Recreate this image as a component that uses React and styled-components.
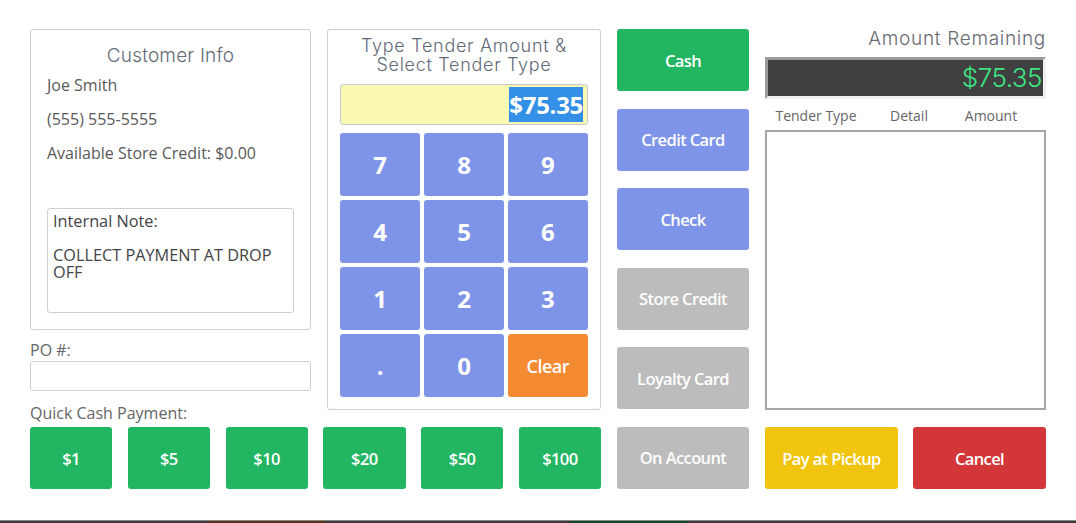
import React from "react"
import styled, { createGlobalStyle } from "styled-components"

const GlobalStyle = createGlobalStyle`
  html, body {
    margin: 0;
    padding: 0;
    background: #3a3a3a;
  }
  body {
    font-family: "Open Sans", "Liberation Sans", sans-serif;
  }
`

const quickCash = ["$1", "$5", "$10", "$20", "$50", "$100"]
const keys = ["7", "8", "9", "4", "5", "6", "1", "2", "3", ".", "0", "Clear"]
const tenders = [
  { label: "Cash", color: "#22b562" },
  { label: "Credit Card", color: "#7d94e9" },
  { label: "Check", color: "#7d94e9" },
  { label: "Store Credit", color: "#bcbcbc" },
  { label: "Loyalty Card", color: "#bcbcbc" },
  { label: "On Account", color: "#bcbcbc" },
]

export default function App() {
  return (
    <>
      <GlobalStyle />
      <Modal>
        <LeftArea>
          <TopRow>
            <CustomerColumn>
              <CustomerBox>
                <PanelTitle>Customer Info</PanelTitle>
                <InfoLine>Joe Smith</InfoLine>
                <InfoLine>(555) 555-5555</InfoLine>
                <InfoLine>Available Store Credit: $0.00</InfoLine>
                <NoteBox>
                  {"Internal Note:\n\nCOLLECT PAYMENT AT DROP OFF"}
                </NoteBox>
              </CustomerBox>
              <FieldLabel>PO #:</FieldLabel>
              <TextInput />
              <FieldLabel $tight>Quick Cash Payment:</FieldLabel>
            </CustomerColumn>

            <KeypadPanel>
              <KeypadTitle>
                Type Tender Amount &amp;
                <br />
                Select Tender Type
              </KeypadTitle>
              <AmountInput>
                <Selected>$75.35</Selected>
              </AmountInput>
              <KeyGrid>
                {keys.map((k) => (
                  <Key key={k} $clear={k === "Clear"}>
                    {k}
                  </Key>
                ))}
              </KeyGrid>
            </KeypadPanel>
          </TopRow>

          <QuickRow>
            {quickCash.map((q) => (
              <ActionButton key={q} $color="#22b562">
                {q}
              </ActionButton>
            ))}
          </QuickRow>
        </LeftArea>

        <TenderColumn>
          {tenders.map((t) => (
            <ActionButton key={t.label} $color={t.color}>
              {t.label}
            </ActionButton>
          ))}
        </TenderColumn>

        <RightColumn>
          <RemainingTitle>Amount Remaining</RemainingTitle>
          <Display>$75.35</Display>
          <TableHead>
            <HeadCell $w={102}>Tender Type</HeadCell>
            <HeadCell $w={84}>Detail</HeadCell>
            <HeadCell $w={80}>Amount</HeadCell>
          </TableHead>
          <TenderList />
          <BottomRow>
            <ActionButton $color="#f1c40f">Pay at Pickup</ActionButton>
            <ActionButton $color="#d33638">Cancel</ActionButton>
          </BottomRow>
        </RightColumn>
      </Modal>
      <Backdrop>
        <Strip $w={208} $c="#3a3a3a" />
        <Strip $w={118} $c="#5a3418" />
        <Strip $w={244} $c="#3a3a3a" />
        <Strip $w={118} $c="#17452a" />
        <Strip $w={388} $c="#3a3a3a" />
      </Backdrop>
    </>
  )
}

const Modal = styled.div`
  box-sizing: border-box;
  width: 1076px;
  height: 521px;
  background: #ffffff;
  border-bottom: 1px solid #8a8a8a;
  padding: 29px 0 0 30px;
  display: flex;
  align-items: flex-start;
  gap: 16px;
`

const Backdrop = styled.div`
  display: flex;
  height: 2px;
`

const Strip = styled.div`
  width: ${(p) => p.$w}px;
  background: ${(p) => p.$c};
`

const LeftArea = styled.div`
  width: 571px;
  display: flex;
  flex-direction: column;
`

const TopRow = styled.div`
  display: flex;
  align-items: flex-start;
  gap: 16px;
`

const CustomerColumn = styled.div`
  width: 281px;
  display: flex;
  flex-direction: column;
`

const CustomerBox = styled.div`
  box-sizing: border-box;
  border: 1px solid #cfcfcf;
  border-radius: 3px;
  padding: 14px 16px 16px;
`

const PanelTitle = styled.div`
  font-family: Inter, "Liberation Sans", sans-serif;
  font-weight: 300;
  font-size: 19px;
  line-height: 24px;
  color: #626a78;
  text-align: center;
  letter-spacing: 0.2px;
`

const InfoLine = styled.div`
  font-size: 16px;
  line-height: 34px;
  color: #595959;
`

const NoteBox = styled.div`
  box-sizing: border-box;
  margin-top: 38px;
  height: 105px;
  border: 1px solid #cfcfcf;
  border-radius: 3px;
  padding: 4px 5px;
  font-size: 16.3px;
  line-height: 17px;
  color: #444444;
  white-space: pre-wrap;
`

const FieldLabel = styled.div`
  margin-top: ${(p) => (p.$tight ? 12 : 10)}px;
  font-size: 16px;
  line-height: 20px;
  color: #666666;
`

const TextInput = styled.div`
  box-sizing: border-box;
  margin-top: 1px;
  height: 30px;
  border: 1px solid #cfcfcf;
  border-radius: 3px;
`

const KeypadPanel = styled.div`
  box-sizing: border-box;
  width: 274px;
  height: 381px;
  border: 1px solid #cfcfcf;
  border-radius: 3px;
  padding: 6px 12px 12px;
`

const KeypadTitle = styled.div`
  font-family: Inter, "Liberation Sans", sans-serif;
  font-weight: 300;
  font-size: 18px;
  line-height: 19px;
  color: #626a78;
  text-align: center;
  letter-spacing: 0.7px;
`

const AmountInput = styled.div`
  box-sizing: border-box;
  margin-top: 10px;
  height: 41px;
  background: #f9f9b4;
  border: 1px solid #c8c8c8;
  border-radius: 3px;
  display: flex;
  align-items: center;
  justify-content: flex-end;
  padding-right: 4px;
`

const Selected = styled.span`
  background: #3390e6;
  color: #ffffff;
  font-weight: 700;
  font-size: 24px;
  line-height: 35px;
  letter-spacing: -0.3px;
`

const KeyGrid = styled.div`
  margin-top: 8px;
  display: grid;
  grid-template-columns: repeat(3, 1fr);
  grid-auto-rows: 63px;
  gap: 4px 3.5px;
`

const Key = styled.div`
  border-radius: 3px;
  background: ${(p) => (p.$clear ? "#f48a31" : "#7d94e9")};
  color: #ffffff;
  font-weight: ${(p) => (p.$clear ? 600 : 700)};
  font-size: ${(p) => (p.$clear ? "18px" : "24px")};
  letter-spacing: ${(p) => (p.$clear ? "-0.5px" : "0")};
  display: flex;
  align-items: center;
  justify-content: center;
`

const QuickRow = styled.div`
  margin-top: 4px;
  display: grid;
  grid-template-columns: repeat(6, 1fr);
  gap: 15.5px;
  height: 62px;
`

const ActionButton = styled.div`
  box-sizing: border-box;
  height: 62px;
  border-radius: 3px;
  background: ${(p) => p.$color};
  color: #ffffff;
  font-weight: 600;
  font-size: 16.5px;
  letter-spacing: -0.6px;
  display: flex;
  align-items: center;
  justify-content: center;
`

const TenderColumn = styled.div`
  width: 132px;
  height: 460px;
  display: flex;
  flex-direction: column;
  justify-content: space-between;
`

const RightColumn = styled.div`
  width: 281px;
  display: flex;
  flex-direction: column;
`

const RemainingTitle = styled.div`
  font-family: Inter, "Liberation Sans", sans-serif;
  font-weight: 300;
  font-size: 19px;
  line-height: 20px;
  color: #666a70;
  text-align: right;
  letter-spacing: 0.7px;
`

const Display = styled.div`
  box-sizing: border-box;
  margin-top: 8px;
  height: 42px;
  background: #404040;
  border-top: 3px solid #9a9a9a;
  border-left: 3px solid #9a9a9a;
  border-bottom: 3px solid #f0f0f0;
  border-right: 3px solid #f0f0f0;
  font-family: Inter, "Liberation Sans", sans-serif;
  font-weight: 300;
  font-size: 26px;
  color: #3ee683;
  text-align: right;
  line-height: 36px;
  padding-right: 1px;
  letter-spacing: -0.5px;
`

const TableHead = styled.div`
  margin-top: 7px;
  display: flex;
  height: 20px;
`

const HeadCell = styled.div`
  width: ${(p) => p.$w}px;
  text-align: center;
  font-size: 14px;
  line-height: 20px;
  color: #666666;
`

const TenderList = styled.div`
  box-sizing: border-box;
  margin-top: 4px;
  height: 280px;
  border: 2px solid #a6a6a6;
  background: #ffffff;
`

const BottomRow = styled.div`
  margin-top: 17px;
  display: grid;
  grid-template-columns: 1fr 1fr;
  gap: 15px;
`
